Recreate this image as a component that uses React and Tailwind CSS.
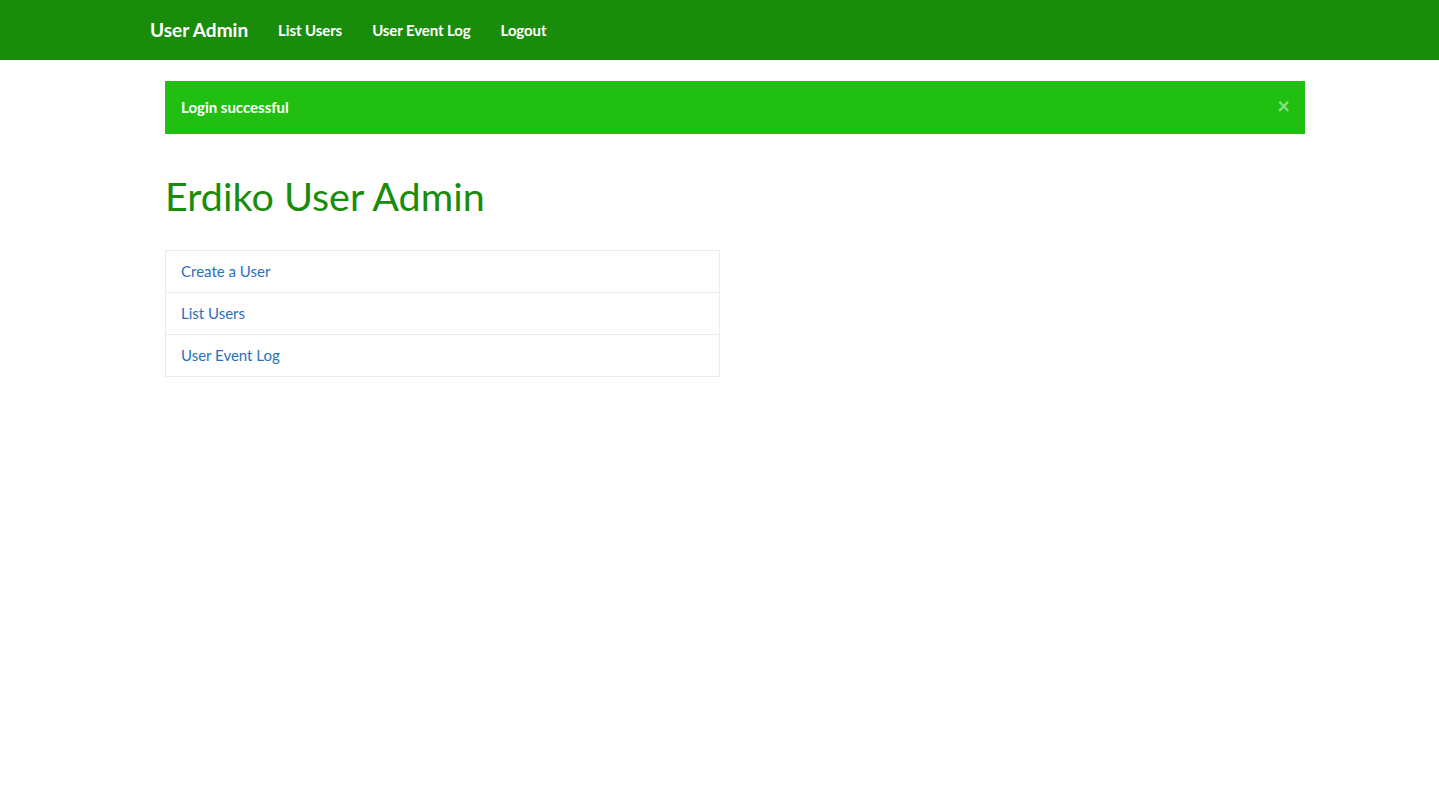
import { useState } from "react";

const navLinks = ["List Users", "User Event Log", "Logout"];
const menuItems = ["Create a User", "List Users", "User Event Log"];

export default function App() {
  const [showAlert, setShowAlert] = useState(true);

  return (
    <div className="min-h-screen bg-white font-['Lato','Open_Sans',sans-serif] text-[15px] text-[#2c3e50]">
      {/* Navbar */}
      <nav className="h-[60px] bg-[#1a8c0b]">
        <div className="flex h-full items-center pl-[135px]">
          <a href="#" className="px-[15px] text-[19px] font-bold text-white">
            User Admin
          </a>
          {navLinks.map((link) => (
            <a key={link} href="#" className="px-[15px] text-[15px] font-bold tracking-[-0.1px] text-white">
              {link}
            </a>
          ))}
        </div>
      </nav>

      <div className="ml-[165px] w-[1140px] pt-[21px]">
        {showAlert && (
          <div className="flex h-[53px] items-center justify-between bg-[#21bf12] px-[16px] text-white">
            <span className="text-[15px] font-bold">Login successful</span>
            <button
              onClick={() => setShowAlert(false)}
              className="mb-[4px] mr-[-1px] text-[22px] font-bold leading-none text-[#8fe088]"
            >
              ×
            </button>
          </div>
        )}

        <h1 className="mt-[40px] text-[39.5px] leading-[1.1] text-[#1a8c0b]">Erdiko User Admin</h1>

        <ul className="mt-[33px] w-[555px] border border-[#ececec]">
          {menuItems.map((item, i) => (
            <li
              key={item}
              className={`flex items-center px-[15px] pb-[2px] ${i > 0 ? "h-[42px] border-t border-[#ececec]" : "h-[41px]"}`}
            >
              <a href="#" className="text-[15px] text-[#2a6fbd]">
                {item}
              </a>
            </li>
          ))}
        </ul>
      </div>
    </div>
  );
}
